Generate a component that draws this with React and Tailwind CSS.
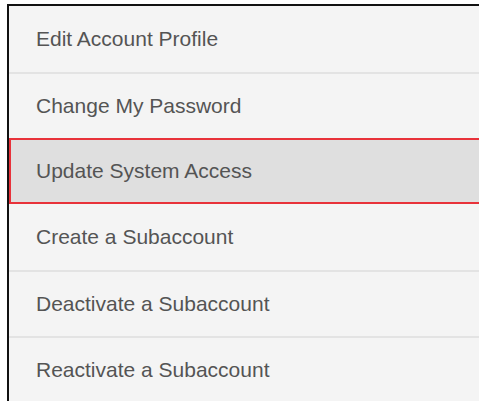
import React from "react";

const items = [
  "Edit Account Profile",
  "Change My Password",
  "Update System Access",
  "Create a Subaccount",
  "Deactivate a Subaccount",
  "Reactivate a Subaccount",
];

const App = () => {
  const active = 2;

  return (
    <div className="h-[401px] w-[479px] overflow-hidden bg-white pt-1 pl-[7px] font-['Liberation_Sans',Arial,sans-serif]">
      {/* Account settings menu */}
      <ul className="h-full w-[520px] border-t-2 border-l-2 border-[#111] bg-[#f4f4f4]">
        {items.map((label, i) => {
          const selected = i === active;
          return (
            <li
              key={label}
              className={
                selected
                  ? "flex h-[66px] items-center border-2 border-[#e8323a] bg-[#dfdfdf] pl-[25px] text-[21px] text-[#545454]"
                  : `flex h-[66px] items-center pl-[27px] text-[21px] text-[#545454] ${
                      i > 0 && i !== active + 1 ? "border-t-2 border-[#e3e3e3]" : ""
                    }`
              }
            >
              {label}
            </li>
          );
        })}
      </ul>
    </div>
  );
};

export default App;
